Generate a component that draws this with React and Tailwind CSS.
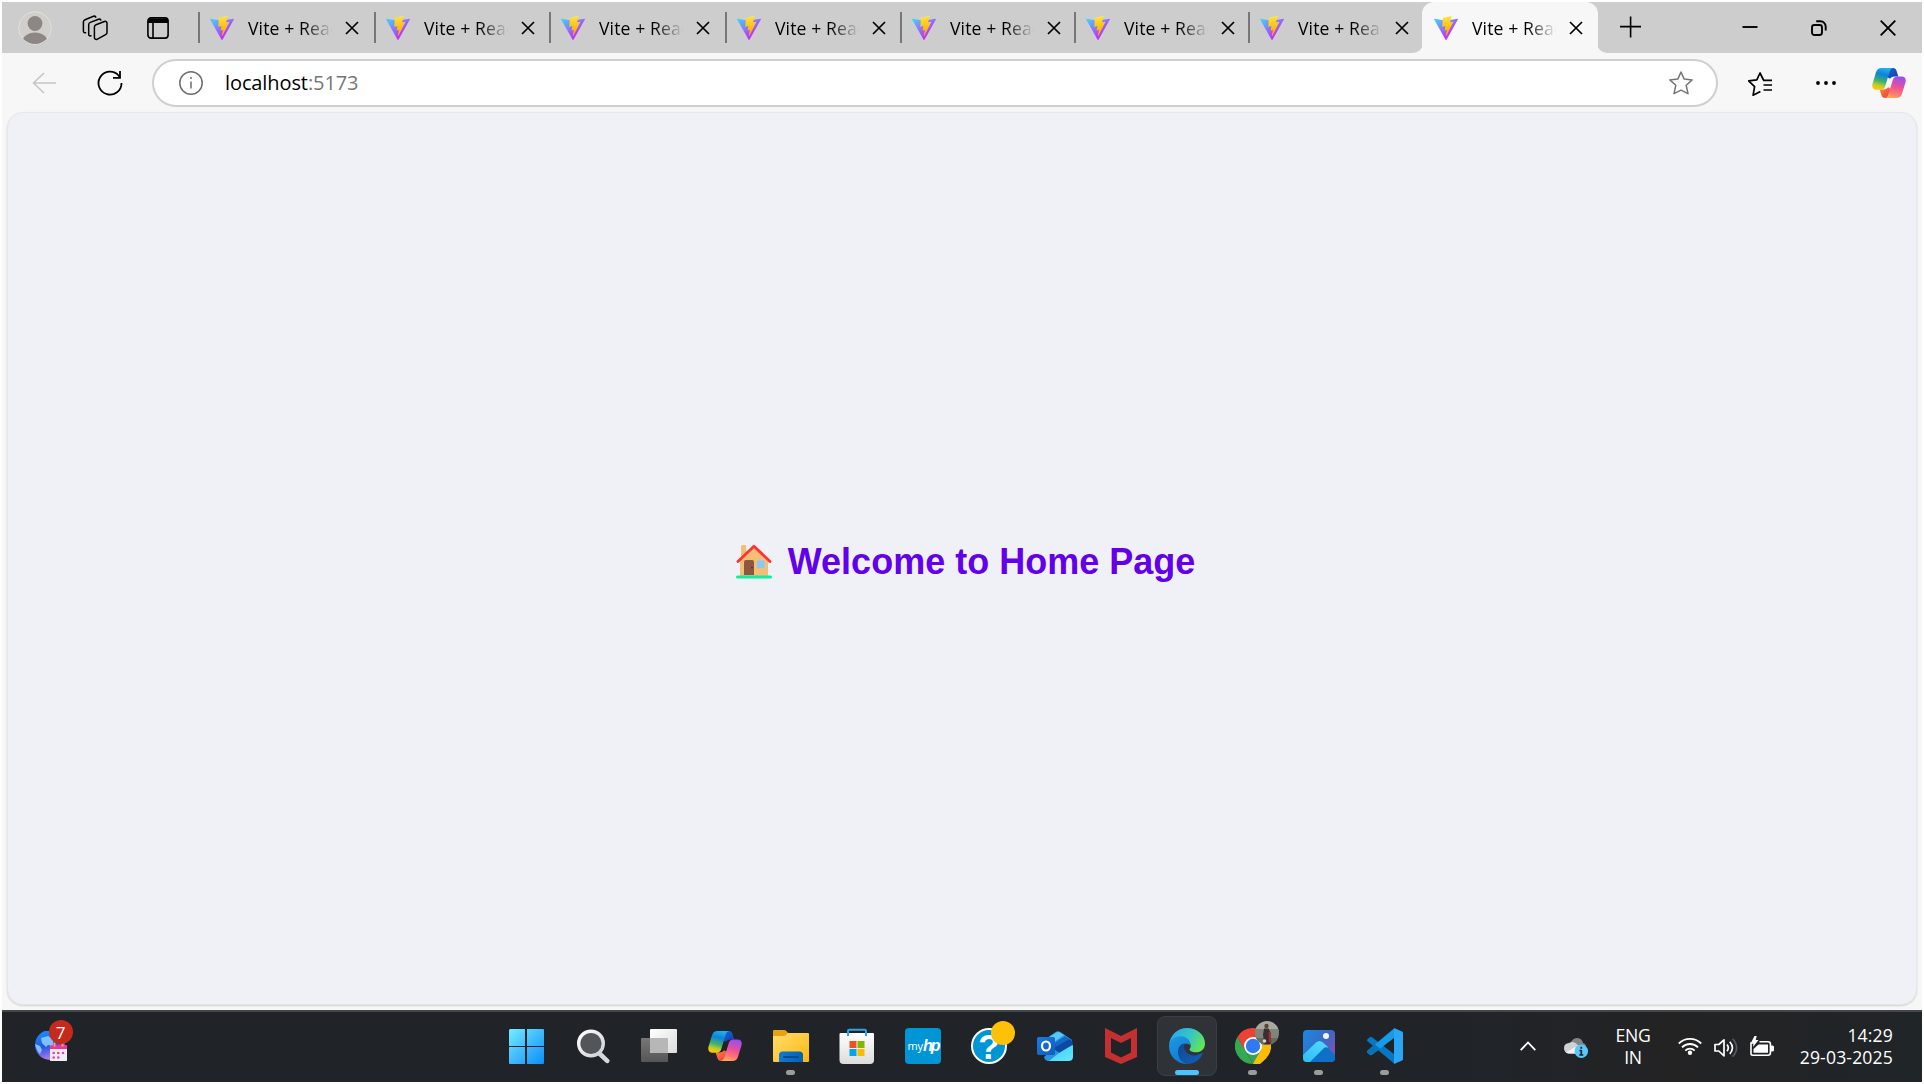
import React from "react";

const uiFont = "font-['Open_Sans','Noto_Sans',sans-serif]";

function ViteLogo({ className = "" }) {
  return (
    <svg viewBox="0 0 256 257" className={"h-6 w-6 shrink-0 " + className}>
      <defs>
        <linearGradient id="viteA" x1="0%" x2="58%" y1="8%" y2="79%">
          <stop offset="0" stopColor="#41D1FF" />
          <stop offset="1" stopColor="#BD34FE" />
        </linearGradient>
        <linearGradient id="viteB" x1="43%" x2="50%" y1="2%" y2="89%">
          <stop offset="0" stopColor="#FFEA83" />
          <stop offset=".083" stopColor="#FFDD35" />
          <stop offset="1" stopColor="#FFA800" />
        </linearGradient>
      </defs>
      <path fill="url(#viteA)" d="M255.153 37.938L134.897 252.976c-2.483 4.44-8.862 4.466-11.382.048L.875 37.958c-2.746-4.814 1.371-10.646 6.827-9.67l120.385 21.517a6.537 6.537 0 0 0 2.322-.004l117.867-21.483c5.438-.991 9.574 4.796 6.877 9.62Z" />
      <path fill="url(#viteB)" d="M185.432.063L96.44 17.501a3.268 3.268 0 0 0-2.634 3.014l-5.474 92.456a3.268 3.268 0 0 0 3.997 3.378l24.777-5.718c2.318-.535 4.413 1.507 3.936 3.838l-7.361 36.047c-.495 2.426 1.782 4.5 4.151 3.78l15.304-4.649c2.372-.72 4.652 1.36 4.15 3.788l-11.698 56.621c-.732 3.542 3.979 5.473 5.943 2.437l1.313-2.028l72.516-144.72c1.215-2.423-.88-5.186-3.54-4.672l-25.505 4.922c-2.396.462-4.435-1.77-3.759-4.114l16.646-57.705c.677-2.35-1.37-4.583-3.769-4.113Z" />
    </svg>
  );
}

function TabBody() {
  return (
    <>
      <ViteLogo />
      <span className="ml-3.5 w-[84px] shrink-0 overflow-hidden whitespace-nowrap text-[17.6px] leading-6 tracking-[0.1px] text-black [mask-image:linear-gradient(to_right,#000_66%,transparent_100%)]">
        Vite + React
      </span>
      <svg viewBox="0 0 14 14" className="ml-[13px] h-3.5 w-3.5 shrink-0" stroke="#000" strokeWidth="1.7" fill="none">
        <path d="M1 1l12 12M13 1L1 13" />
      </svg>
    </>
  );
}

const inactiveTabs = ["w-[176px]", "w-[175px]", "w-[176px]", "w-[175px]", "w-[174px]", "w-[174px]", "w-[174px]"];

function TabStrip() {
  return (
    <div className="flex h-[51px] shrink-0 bg-[#cdcdcd]">
      <div className="flex w-[196px] shrink-0 items-center">
        <svg viewBox="0 0 34 34" className="ml-4 h-[34px] w-[34px]">
          <clipPath id="avatar"><circle cx="17" cy="17" r="16" /></clipPath>
          <circle cx="17" cy="17" r="16.3" fill="#d1cfcc" stroke="#e2e0dd" strokeWidth="1" />
          <g clipPath="url(#avatar)" fill="#8c8784">
            <circle cx="17" cy="12.5" r="7.4" />
            <ellipse cx="17" cy="32" rx="13" ry="10.5" />
          </g>
        </svg>
        <svg viewBox="0 0 26 26" className="ml-[30px] h-[26px] w-[26px]" fill="none" stroke="#000" strokeWidth="1.5" strokeLinejoin="round" strokeLinecap="round">
          <path d="M14 9.800l8.400-3.300a1.900 1.900 0 0 1 2.600 1.800v9.300a2.200 2.200 0 0 1-1.400 2L15 24.300a1.900 1.900 0 0 1-2.600-1.800V12.100a2.500 2.500 0 0 1 1.600-2.300z" />
          <path d="M9 20.800l-.8.200a1.500 1.500 0 0 1-1.500-1.600V9.700a2.500 2.500 0 0 1 1.600-2.300l8.200-3.200a1.900 1.900 0 0 1 2.300.8" />
          <path d="M3.600 17.700h-.7a1.600 1.600 0 0 1-1.500-1.700V7a2.500 2.500 0 0 1 1.600-2.300l8.500-3.400a1.900 1.900 0 0 1 2.300.8" />
        </svg>
        <svg viewBox="0 0 22 22" className="ml-[39px] h-[22px] w-[22px]" fill="none" stroke="#000" strokeWidth="1.6">
          <rect x=".9" y=".9" width="20.2" height="20.2" rx="3.2" />
          <path d="M1 1.5h20V6H1z" fill="#000" stroke="none" />
          <path d="M6 6v15" />
        </svg>
      </div>
      {inactiveTabs.map((w, i) => (
        <div key={i} className={"flex shrink-0 items-center " + w}>
          <span className="h-[31px] w-0.5 bg-[#777] mr-[10px]" />
          <TabBody />
        </div>
      ))}
      <div className="relative flex w-[176px] shrink-0 items-center rounded-t-xl bg-[#f7f7f7] pl-3">
        <TabBody />
        <svg viewBox="0 0 10 10" className="absolute -left-[9px] bottom-0 h-2.5 w-2.5"><path d="M10 0v10H0A10 10 0 0 0 10 0z" fill="#f7f7f7" /></svg>
        <svg viewBox="0 0 10 10" className="absolute -right-[9px] bottom-0 h-2.5 w-2.5"><path d="M0 0v10h10A10 10 0 0 1 0 0z" fill="#f7f7f7" /></svg>
      </div>
      <svg viewBox="0 0 22 22" className="ml-[22px] mt-3.5 h-[22px] w-[22px]" stroke="#000" strokeWidth="1.6"><path d="M10.6 .5v21M0 10.6h21" /></svg>
      <div className="ml-auto mr-[26px] flex items-center gap-[53px] pt-px">
        <svg viewBox="0 0 16 16" className="h-4 w-4" stroke="#000" strokeWidth="1.9"><path d="M.5 7h15" /></svg>
        <svg viewBox="0 0 16 16" className="h-4 w-4" fill="none" stroke="#000" strokeWidth="1.9">
          <rect x="1" y="5" width="10" height="10" rx="2.4" />
          <path d="M5.2 1.3h4.3a5.2 5.2 0 0 1 5.2 5.2v4" />
        </svg>
        <svg viewBox="0 0 16 16" className="h-4 w-4" stroke="#000" strokeWidth="1.9"><path d="M.7 .7l14.6 14.6M15.3 .7L.7 15.3" /></svg>
      </div>
    </div>
  );
}

function Copilot({ id, className = "" }) {
  return (
    <svg viewBox="0 0 34 30" className={"h-[30px] w-[34px] shrink-0 " + className}>
      <defs>
        <linearGradient id={id + "a"} x1=".6" y1="0" x2=".35" y2="1">
          <stop offset="0" stopColor="#22b0ee" />
          <stop offset=".3" stopColor="#0e82dc" />
          <stop offset=".62" stopColor="#42b26c" />
          <stop offset=".82" stopColor="#c1cc27" />
          <stop offset="1" stopColor="#ffc800" />
        </linearGradient>
        <linearGradient id={id + "b"} x1=".7" y1="0" x2=".4" y2="1">
          <stop offset="0" stopColor="#9a4df0" />
          <stop offset=".45" stopColor="#e6509f" />
          <stop offset=".75" stopColor="#ff7078" />
          <stop offset="1" stopColor="#ffa65a" />
        </linearGradient>
        <linearGradient id={id + "c"} x1="0" y1="0" x2="1" y2="1">
          <stop offset="0" stopColor="#0f6fd0" />
          <stop offset="1" stopColor="#1b35b8" />
        </linearGradient>
        <linearGradient id={id + "d"} x1="0" y1="0" x2="1" y2="1">
          <stop offset="0" stopColor="#ff8a3c" />
          <stop offset="1" stopColor="#e8363f" />
        </linearGradient>
      </defs>
      <path fill={`url(#${id}c)`} d="M17 0h4c2 0 3 1.100 3.600 3l1.700 5.500h-3.800c-1.800 0-3.300.7-4.600 2.200L15 9z" />
      <path fill={`url(#${id}d)`} d="M7.700 21.500h3.800c1.800 0 3.300-.7 4.600-2.200L19 21l-3.500 9H13c-2 0-3-1.100-3.600-3z" />
      <path fill={`url(#${id}a)`} d="M9.600 0h11.600c-1.800.3-2.900 1.500-3.500 3.400l-4.500 14.900c-.7 2.200-2 3.500-4.300 3.500H4.500C1.200 21.800-.3 19.300.4 16L4 4.300C4.900 1.400 6.600 0 9.600 0z" />
      <path fill={`url(#${id}b)`} d="M24.400 30H12.800c1.800-.3 2.900-1.500 3.500-3.400l4.500-14.600c.7-2.200 2-3.500 4.300-3.500h4.400c3.300 0 4.800 2.300 4.100 5.600L30 25.700c-.9 2.900-2.600 4.300-5.600 4.300z" />
    </svg>
  );
}

function Toolbar() {
  return (
    <div className="flex h-[59px] shrink-0 items-center bg-[#f7f7f7]">
      <svg viewBox="0 0 24 22" className="ml-[30px] h-[22px] w-6" fill="none" stroke="#c6c6c6" strokeWidth="1.6"><path d="M24 11H1M12 1L1.500 11 12 21" /></svg>
      <svg viewBox="0 0 26 26" className="ml-[41px] h-[26px] w-[26px]" fill="none" stroke="#000" strokeWidth="1.8"><path d="M24.500 13A11.500 11.500 0 1 1 21.600 5.500L23 7.700M23 1v6.800h-7" /></svg>
      <div className="ml-[29px] flex h-[48px] w-[1566px] items-center rounded-full border-2 border-[#cfcfcf] bg-white">
        <svg viewBox="0 0 24 24" className="ml-[25px] h-6 w-6" fill="none" stroke="#6d6d6d" strokeWidth="1.5">
          <circle cx="12" cy="12" r="11.200" />
          <path d="M12 10.500v7" />
          <circle cx="12" cy="7" r="1" fill="#6d6d6d" stroke="none" />
        </svg>
        <span className="ml-[22px] text-[20px] leading-7 tracking-[-0.1px] text-black">localhost<span className="text-[#767676]">:5173</span></span>
        <svg viewBox="0 0 24 24" className="ml-auto mr-[23px] h-6 w-6" fill="none" stroke="#757575" strokeWidth="1.5" strokeLinejoin="round"><path d="M12 1l3.200 7.100 8 .8-6 5.400 1.800 8.400-7-3.500-7 3.500 1.800-8.400-6-5.400 8-.8z" /></svg>
      </div>
      <svg viewBox="0 0 24 24" className="ml-[30px] mt-0.5 h-6 w-6" fill="none" stroke="#000" strokeWidth="1.700" strokeLinejoin="round">
        <path d="M15.500 8L12 1 8.800 7.900l-8.200 1 6 5.800-1.500 8.500 7.300-3.700M15 8.300H24M15.500 13H24M15.500 18H24" />
      </svg>
      <svg viewBox="0 0 20 4" className="ml-[44px] h-1 w-5"><circle cx="2" cy="2" r="1.900" /><circle cx="10" cy="2" r="1.900" /><circle cx="18" cy="2" r="1.900" /></svg>
      <Copilot id="cpTop" className="ml-[36px]" />
    </div>
  );
}

function House() {
  return (
    <svg viewBox="0 0 36 36" className="h-9 w-9 shrink-0">
      <path fill="#f3be78" d="M5 2.500Q5 1 6.500 1h2.600q1 0 1 1v8L5 14zM4 17L18 3.500 32 17v16H4z" />
      <path fill="#8d5740" d="M8 18q0-2 2-2h6q2 0 2 2v13H8z" />
      <circle cx="16" cy="23.500" r=".9" fill="#5d3527" />
      <rect x="21" y="16.500" width="7.500" height="7.500" rx=".8" fill="#83cbff" />
      <path d="M2 17.500L18 2.200 34 17.500" fill="none" stroke="#ff3231" strokeWidth="2.800" strokeLinecap="round" strokeLinejoin="round" />
      <rect x="0" y="31.500" width="36" height="3" rx="1.500" fill="#0df09a" />
    </svg>
  );
}

const icon36 = "h-9 w-9";

function WindowsIcon() {
  return (
    <svg viewBox="0 0 36 36" className={icon36 + " mr-[3px]"}>
      <defs><linearGradient id="win" gradientUnits="userSpaceOnUse" x1="0" y1="0" x2="35" y2="35"><stop offset="0" stopColor="#75f2ff" /><stop offset=".5" stopColor="#44bdfc" /><stop offset="1" stopColor="#0b93fb" /></linearGradient></defs>
      <path fill="url(#win)" d="M2 1h15v17H1V2zM19 1h16q1 0 1 1v16H19zM1 19h16v17H2q-1 0-1-1zM19 19h17v16q0 1-1 1H19z" />
    </svg>
  );
}
function SearchIcon() {
  return (
    <svg viewBox="0 0 36 36" className={icon36}>
      <defs><linearGradient id="srch" x1="0" y1="0" x2="1" y2="1"><stop offset="0" stopColor="#fff" /><stop offset="1" stopColor="#ccd0d5" /></linearGradient></defs>
      <path d="M25 26l7.200 6.800" stroke="#d5d9dd" strokeWidth="4.600" strokeLinecap="round" />
      <circle cx="16" cy="15.500" r="12.300" fill="#52565a" stroke="url(#srch)" strokeWidth="3.400" />
    </svg>
  );
}
function TaskViewIcon() {
  return (
    <svg viewBox="0 0 36 36" className={icon36}>
      <defs>
        <linearGradient id="tv" x1="0" y1="0" x2="1" y2="1"><stop offset="0" stopColor="#fff" /><stop offset="1" stopColor="#dcdcdc" /></linearGradient>
        <linearGradient id="tv2" x1="0" y1="0" x2="0" y2="1"><stop offset="0" stopColor="#777" /><stop offset="1" stopColor="#565656" /></linearGradient>
      </defs>
      <rect x="0" y="10" width="27" height="24" rx="1" fill="url(#tv2)" />
      <rect x="9" y="1" width="27" height="24" rx="1" fill="url(#tv)" />
      <path d="M9 10h17q1 0 1 1v14H10q-1 0-1-1z" fill="#b7b7b7" />
    </svg>
  );
}
function FolderIcon() {
  return (
    <svg viewBox="0 0 36 36" className={icon36}>
      <defs>
        <linearGradient id="fold" x1="0" y1="0" x2="1" y2="1"><stop offset="0" stopColor="#ffdc6e" /><stop offset="1" stopColor="#fdb90f" /></linearGradient>
        <linearGradient id="fold2" x1="0" y1="0" x2="1" y2="0"><stop offset="0" stopColor="#0f7ad2" /><stop offset="1" stopColor="#0560b5" /></linearGradient>
      </defs>
      <path fill="#e5a30f" d="M1 2h10q1.500 0 2.500 1.200L16 6v4H0V3q0-1 1-1z" />
      <path fill="url(#fold)" d="M0 8h11q1 0 2-1l2-2h20q1 0 1 1v27q0 1-1 1H1q-1 0-1-1z" />
      <path fill="url(#fold2)" d="M6 34v-7q0-3.500 3.500-3.500h17q3.500 0 3.500 3.500v7z" />
      <path d="M11 29h14" stroke="#084b92" strokeWidth="2" strokeLinecap="round" />
    </svg>
  );
}
function StoreIcon() {
  return (
    <svg viewBox="0 0 36 36" className={icon36}>
      <defs><linearGradient id="store" x1="0" y1="0" x2="0" y2="1"><stop offset="0" stopColor="#fff" /><stop offset="1" stopColor="#dcdcdc" /></linearGradient></defs>
      <path fill="url(#store)" d="M2 5h32q1 0 1 1v26q0 4-4 4H4.500q-4 0-4-4V6q0-1 1.500-1z" />
      <path d="M9 8V3q0-1.200 1.200-1.200h15.600Q27 1.800 27 3v5" fill="none" stroke="#28a7e8" strokeWidth="2" />
      <path fill="#f25022" d="M10.500 13h7v7h-7z" /><path fill="#7fba00" d="M18.500 13h7v7h-7z" />
      <path fill="#00a4ef" d="M10.500 21h7v7h-7z" /><path fill="#ffb900" d="M18.500 21h7v7h-7z" />
    </svg>
  );
}
function HpIcon() {
  return (
    <div className="flex h-9 w-9 items-center justify-center rounded-sm bg-[#0096d6] text-white">
      <span className="text-[11px] leading-9">my</span>
      <span className="font-['Liberation_Sans',sans-serif] text-[16px] font-bold italic leading-9 tracking-[-2px]">hp</span>
    </div>
  );
}
function HelpIcon() {
  return (
    <div className="relative flex h-9 w-9 items-center justify-center rounded-full border-2 border-white bg-[#0096d6]">
      <span className="font-['Liberation_Sans',sans-serif] text-[35px] font-bold leading-none text-white">?</span>
      <span className="absolute -right-[10px] -top-[9px] h-6 w-6 rounded-full bg-[#ffc107]" />
    </div>
  );
}
function OutlookIcon() {
  return (
    <svg viewBox="0 0 36 36" className={icon36}>
      <defs>
        <linearGradient id="ol" x1="0" y1="0" x2="1" y2="1"><stop offset="0" stopColor="#32d0f5" /><stop offset="1" stopColor="#67e5ff" /></linearGradient>
        <linearGradient id="ol2" x1="0" y1="0" x2="1" y2="1"><stop offset="0" stopColor="#1b7be0" /><stop offset="1" stopColor="#0f5cbd" /></linearGradient>
      </defs>
      <path fill="#2a9de4" d="M7 12L19 3.800q2-1.300 4 0L35 12v15H7z" />
      <path fill="#5cc6f5" d="M11 10l9-5.800q1-.6 2.400.1L27 7 14 16z" />
      <path fill="#1269c7" d="M14 17L28 8l4.500 3L18 21z" />
      <path fill="url(#ol)" d="M36 17v11.500q0 4.500-4.500 4.500H13q-4 0-5-3z" />
      <path fill="#0c49a0" d="M16 20.500L32.500 11Q36 12.500 36 16.500L22 25z" />
      <path fill="#2a93df" d="M16 21l6 4-10 8q-4 0-5-4z" />
      <rect x="0" y="9" width="18" height="18" rx="1.800" fill="url(#ol2)" />
      <ellipse cx="9" cy="18" rx="4" ry="4.500" fill="none" stroke="#fff" strokeWidth="2.200" />
    </svg>
  );
}
function McAfeeIcon() {
  return <svg viewBox="0 0 36 36" className={icon36}><path fill="#c3302f" fillRule="evenodd" d="M2 0l16 8L34 0v29l-16 7-16-7zM8 10v14.500l10 5 10-5V10l-10 5z" /></svg>;
}
function EdgeIcon() {
  return (
    <svg viewBox="0 0 36 36" className={icon36}>
      <defs>
        <linearGradient id="ed1" x1="0" y1=".3" x2="1" y2=".7"><stop offset="0" stopColor="#29a9e8" /><stop offset=".5" stopColor="#34c6c6" /><stop offset="1" stopColor="#67e84a" /></linearGradient>
        <linearGradient id="ed2" x1="0" y1="0" x2=".6" y2="1"><stop offset="0" stopColor="#1c9be5" /><stop offset="1" stopColor="#1477d1" /></linearGradient>
        <linearGradient id="ed3" x1="0" y1="0" x2="1" y2="1"><stop offset="0" stopColor="#0b4a97" /><stop offset="1" stopColor="#1560b8" /></linearGradient>
      </defs>
      <path fill="url(#ed1)" d="M0 17C1 7 8.500 0 18 0c10.500 0 18 7.300 18 15.500C36 21 32 24.300 27 24.300c-4 0-6.500-1.500-6.500-2.700 0-.9 1.200-1.300 1.200-3.800C21.700 13 17 9.500 11.500 9.500 6 9.500 1.500 12 0 17z" />
      <path fill="url(#ed2)" d="M0 18C.3 12 5.500 8 11.800 8.200c5.700.2 9.700 4 10 9.300-2-2-5.200-2.200-8-1.500-4 2-5 6-4.300 10 .9 5 4.500 8.500 9 10C8 36 0 28.500 0 18z" />
      <path fill="url(#ed3)" d="M16 15.400c-.8 1.300-1 2.800-.7 4.500.8 5.300 7 8.300 12 7.300 2.500-.5 4.500-1.700 5.700-2.100.6-.1.900.4.5 1C30.500 32.500 25 36 18.500 36 11.500 34.500 8 28 9.800 21.500c.9-3.300 3.300-5.500 6.200-6.100z" />
    </svg>
  );
}
function ChromeIcon() {
  return (
    <div className="relative h-9 w-9">
      <svg viewBox="0 0 36 36" className={icon36}>
        <path fill="#ea4335" d="M18 18L2.400 9A18 18 0 0 1 33.600 9z" />
        <path fill="#fbbc04" d="M18 18l15.600-9A18 18 0 0 1 18 36z" />
        <path fill="#34a853" d="M18 36A18 18 0 0 1 2.400 9l8 13.500z" />
        <path fill="#ea4335" d="M2.400 9H18v9h-8.500l-1 2z" />
        <path fill="#34a353" d="M10 22l8-4 7.800 4.500L18 36z" />
        <path fill="#fbbc04" d="M18 9h15.600q5 13-5 23.500T18 36l8-13.500z" />
        <circle cx="18" cy="18" r="9" fill="#fff" /><circle cx="18" cy="18" r="7.200" fill="#3079ee" />
      </svg>
      <svg viewBox="0 0 24 24" className="absolute -right-2 -top-[7px] h-6 w-6">
        <defs><clipPath id="ph"><circle cx="12" cy="12" r="12" /></clipPath></defs>
        <g clipPath="url(#ph)">
          <path fill="#a9a99f" d="M0 0h24v10H0z" /><path fill="#7d867b" d="M0 8h24v16H0z" /><path fill="#646b60" d="M0 17h24v7H0z" />
          <circle cx="11.500" cy="5" r="2.200" fill="#5b4436" />
          <path fill="#392f30" d="M9 7.500h4.500l2 4V23H9.500L8 14z" /><path fill="#a92831" d="M13.500 11h2.200l.6 10h-2.500z" />
          <circle cx="9.500" cy="20" r="1.800" fill="#d9d5d1" />
        </g>
      </svg>
    </div>
  );
}
function PhotosIcon() {
  return (
    <svg viewBox="0 0 32 32" className="h-8 w-8">
      <defs>
        <linearGradient id="pt" x1="0" y1=".2" x2="1" y2=".8"><stop offset="0" stopColor="#1f86dd" /><stop offset=".55" stopColor="#3b68c4" /><stop offset="1" stopColor="#8750b0" /></linearGradient>
        <linearGradient id="pt2" x1=".7" y1="0" x2="0" y2="1"><stop offset="0" stopColor="#4ed7ff" /><stop offset="1" stopColor="#2ebcf3" /></linearGradient>
        <clipPath id="ptc"><rect width="32" height="32" rx="4" /></clipPath>
      </defs>
      <g clipPath="url(#ptc)">
        <path fill="url(#pt)" d="M0 0h32v32H0z" />
        <path fill="url(#pt2)" d="M0 25l13-12.500q3.500-3 7 0L25 17 8 32H0z" />
        <path fill="#0f70c9" d="M7 32l14-14q2-1.500 4 0l7 7v7z" />
        <circle cx="23" cy="6" r="3" fill="#f2f5fc" />
      </g>
    </svg>
  );
}
function CodeIcon() {
  return (
    <svg viewBox="0 0 36 36" className={icon36}>
      <path fill="#0877c3" d="M.5 11.200l2.300-2q1-.8 2.200 0L27 26v9.500L.5 13.300q-1-1 0-2.100z" />
      <path fill="#169be8" d="M.5 24.800l2.300 2q1 .8 2.200 0L27 10V.5L.5 22.700q-1 1 0 2.100z" />
      <path fill="#0872b8" d="M7.500 16L.5 22.700q-1 1 0 2.100l2.300 2q1 .8 2.200 0l8-6z" />
      <path fill="#2ba6f5" d="M27 0l8 3.500q1 .5 1 1.500v26q0 1-1 1.500L27 36z" />
    </svg>
  );
}

const apps = [
  { icon: <WindowsIcon /> }, { icon: <SearchIcon /> }, { icon: <TaskViewIcon /> }, { icon: <Copilot id="cpBar" /> },
  { icon: <FolderIcon />, dot: true }, { icon: <StoreIcon /> }, { icon: <HpIcon /> }, { icon: <HelpIcon /> }, { icon: <OutlookIcon /> },
  { icon: <McAfeeIcon /> }, { icon: <EdgeIcon />, active: true }, { icon: <ChromeIcon />, dot: true }, { icon: <PhotosIcon />, dot: true }, { icon: <CodeIcon />, dot: true },
];

function WidgetsIcon() {
  return (
    <div className="relative ml-[33px] h-[30px] w-8">
      <svg viewBox="0 0 32 30" className="h-[30px] w-8">
        <defs><linearGradient id="gl" x1="0" y1="0" x2=".3" y2="1"><stop offset="0" stopColor="#1499ff" /><stop offset=".6" stopColor="#2756e0" /><stop offset="1" stopColor="#a97bee" /></linearGradient></defs>
        <circle cx="15" cy="14" r="15" fill="url(#gl)" />
        <path fill="#8fd0ff" d="M6 7l7-2 5 3v7l-5-1-2 2-4-4zM0 13l5 2 2 4-2 4q-4-4-5-10z" opacity=".85" />
        <rect x="15" y="14" width="17" height="17" rx="2" fill="#eceef4" />
        <path fill="#fd2da0" d="M15 18v-2q0-2 2-2h13q2 0 2 2v2z" />
        <path d="M19.500 11.500v4M27.500 11.500v4" stroke="#efae3c" strokeWidth="2" />
        <g fill="#ee3fa0"><circle cx="18.700" cy="22" r="1.300" /><circle cx="23.300" cy="22" r="1.300" /><circle cx="28" cy="22" r="1.300" /><circle cx="18.700" cy="26.500" r="1.300" /><circle cx="23.300" cy="26.500" r="1.300" /></g>
      </svg>
      <span className="absolute -top-[11px] left-[13.500px] flex h-6 w-6 items-center justify-center rounded-full bg-[#c42b1c] text-[17px] leading-none text-white">7</span>
    </div>
  );
}

function Tray() {
  return (
    <div className="ml-auto mr-[28px] flex items-center text-[17.600px] leading-[22.500px] text-white">
      <svg viewBox="0 0 16 10" className="h-2.5 w-4" fill="none" stroke="#fff" strokeWidth="1.800"><path d="M.7 9.200L8 1.500l7.300 7.700" /></svg>
      <svg viewBox="0 0 24 20" className="ml-7 mt-1 h-5 w-6">
        <path fill="#838689" d="M7 4Q9 0 13.500 0q4.500.3 5.500 5 3 .8 3 4L8 9z" />
        <path fill="#cfd1d3" d="M5 15.500q-5-.5-5-5.500 0-4.500 5-5 3-2 6.500 0l6 5v5.500z" />
        <path fill="#f2f2f2" d="M2 14.500L11 9l5 6.500H5q-2 0-3-1z" />
        <circle cx="17.300" cy="13.300" r="6.700" fill="#5bc8fb" />
        <path d="M17.300 8.800v2M17.300 12v5.500M15.500 12.500h1.800M15.300 17h4" stroke="#17252e" strokeWidth="1.700" />
      </svg>
      <div className="ml-[27px] w-[36px] text-center tracking-[-0.300px]">ENG<br />IN</div>
      <svg viewBox="0 0 24 18" className="ml-[27px] h-[18px] w-6" fill="none" stroke="#fff" strokeWidth="1.800">
        <path d="M.8 6.500a16 16 0 0 1 22.400 0M4 10.300a11.300 11.300 0 0 1 16 0M7.300 13.600a6.700 6.700 0 0 1 9.400 0" /><circle cx="12" cy="15.800" r="2.200" fill="#fff" stroke="none" />
      </svg>
      <svg viewBox="0 0 24 20" className="ml-3 mt-1 h-5 w-6" fill="none" stroke="#fff" strokeWidth="1.700" strokeLinejoin="round">
        <path d="M1 6.500h3.800L10 1.800v16L4.800 13H1zM13 6.500q2.600 3.300 0 6.600M15.800 3.700q5.200 6 0 12.200" /><path d="M18.600 .8q8 9 0 18" stroke="#555a5e" />
      </svg>
      <svg viewBox="0 0 24 20" className="ml-3 h-5 w-6">
        <path d="M4 7H1v10.500q0 1.700 1.700 1.700H18q2.400 0 2.400-2.400V8q0-2.300-2.400-2.300H9.500" fill="none" stroke="#fff" strokeWidth="1.600" />
        <path fill="#fff" d="M3.500 16.700V13l5-4.500H18v8.200zM21 9.500h1.500q1.500 0 1.500 1.500v3q0 1.500-1.500 1.500H21zM4.500 0L1 6.700h2.500L3 11l5.500-7H5.700l1-4z" />
      </svg>
      <div className="ml-[25px] mr-px w-[94px] whitespace-nowrap text-right tracking-[0.150px]">14:29<br />29-03-2025</div>
    </div>
  );
}

export default function App() {
  return (
    <div className={"flex h-[1084px] w-[1924px] flex-col overflow-hidden bg-white p-0.5 " + uiFont}>
      <TabStrip />
      <Toolbar />
      <main className="flex h-[898px] shrink-0 bg-[#f7f7f7] px-[5px] pb-[5px]">
        <div className="flex flex-1 items-center justify-center rounded-2xl border border-[#e6e7e7] bg-[#f0f1f6] pl-[7px] pt-1.5 shadow-[0_1px_2px_rgba(0,0,0,0.15)]">
          <h1 className="flex items-center gap-4 whitespace-nowrap font-['Liberation_Sans',Arial,sans-serif] text-[36px] font-bold leading-[42px] text-[#6200ea]">
            <House />
            Welcome to Home Page
          </h1>
        </div>
      </main>
      <footer className="flex h-[72px] shrink-0 items-center border-t-2 border-[#43474a] bg-[linear-gradient(90deg,#202428_0%,#202429_75%,#232324_87%,#202528_100%)] pb-0.5">
        <WidgetsIcon />
        <nav className="ml-[427px] flex h-full items-center">
          {apps.map(({ icon, dot, active }, i) => (
            <div key={i} className={"relative mx-[3px] flex h-[60px] w-[60px] items-center justify-center rounded-lg " + (active ? "border border-[#3b3e42] bg-[#2f3236]" : "")}>
              {icon}
              {dot && <span className="absolute bottom-px left-[25px] h-[5px] w-[9px] rounded-full bg-[#9c9c9f]" />}
              {active && <span className="absolute bottom-0 left-[17px] h-[5px] w-6 rounded-full bg-[#4cc2ff]" />}
            </div>
          ))}
        </nav>
        <Tray />
      </footer>
    </div>
  );
}
